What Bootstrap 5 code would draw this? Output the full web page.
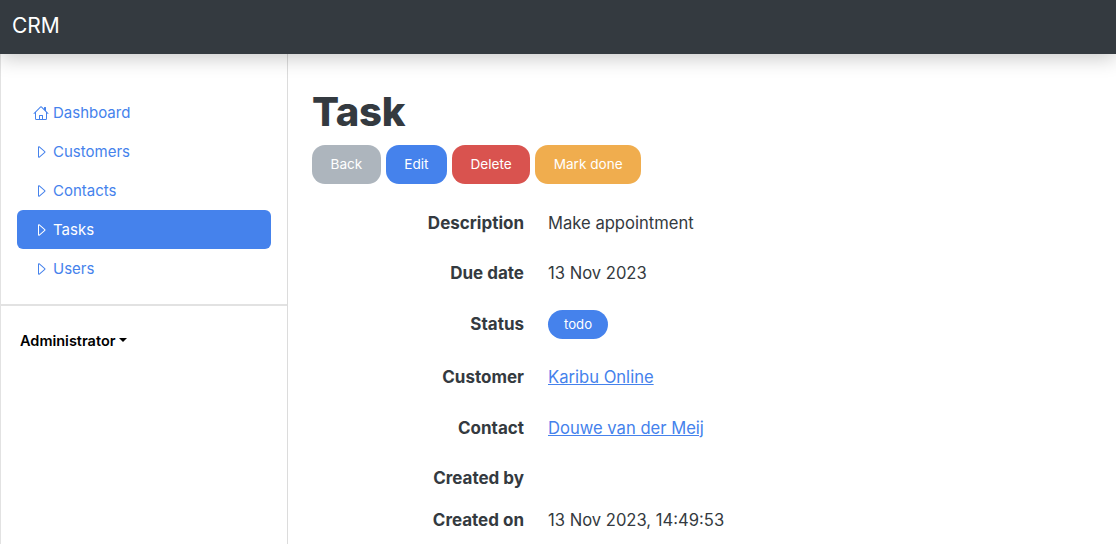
<!DOCTYPE html>
<html lang="en"><head><meta charset="utf-8"><title>Task</title>
<link href="https://cdn.jsdelivr.net/npm/bootstrap@5.3.0/dist/css/bootstrap.min.css" rel="stylesheet">
<style>
html,body{height:100%;overflow:hidden}
body{font-family:Inter,"Liberation Sans",sans-serif;color:#343a40;font-size:16px}
.crm-top{height:54px;background:#343a40;box-shadow:0 4px 20px rgba(0,0,0,.22);position:relative;z-index:2;padding:0 12px}
.crm-brand{color:#fff;font-size:21px;text-decoration:none;margin-top:-2px}
.crm-wrap{height:490px}
.crm-side{width:288px;flex:none;border-left:1px solid #e2e2e2;border-right:1px solid #dcdcdc;padding-top:39px}
.crm-nav{padding:0 16px;gap:0}
.crm-nav .nav-link{height:39px;padding:0 16px;display:flex;align-items:center;color:#4582ec;border-radius:6px;line-height:24px;font-size:15px}
.crm-nav .nav-link.active{background:#4582ec;color:#fff}
.crm-nav svg{width:16px;height:16px;margin-right:4px;flex:none}
.crm-rule{height:2px;background:#e2e2e2;margin-top:16px}
.crm-user{color:#000;font-weight:600;font-size:14.5px;text-decoration:none;display:inline-block;margin:24px 0 0 19px}
.crm-main{padding:29px 24px 0;min-width:0}
.crm-title{font-size:40px;font-weight:800;line-height:48px;margin:5px 0 9px;color:#343a40;letter-spacing:-.3px}
.crm-btn{border-radius:13px;height:39px;padding:0 18.5px;border:0;color:#fff;font-size:13.6px;line-height:39px}
.crm-back,.crm-back:hover{background:#adb5bd;color:#fff}
.crm-edit,.crm-edit:hover{background:#4582ec;color:#fff}
.crm-del,.crm-del:hover{background:#d9534f;color:#fff}
.crm-warn,.crm-warn:hover{background:#f0ad4e;color:#fff}
.crm-btns{gap:5px;margin-bottom:27px}
.crm-row{display:flex;gap:24px;line-height:24px;margin-bottom:26.4px;font-size:16.6px}
.crm-row dt{width:212px;text-align:right;flex:none;font-weight:700;margin:0;font-size:17px}
.crm-row dd{margin:0}
.crm-row a{color:#4582ec}
.crm-pill{display:inline-block;background:#4582ec;color:#fff;font-size:13.2px;font-weight:400;border-radius:15px;padding:0 16px;line-height:29px;height:29px;vertical-align:top;margin-top:-2px}
</style></head><body>
<nav class="navbar crm-top d-flex align-items-center"><a class="crm-brand" href="#">CRM</a></nav>
<div class="d-flex crm-wrap">
<aside class="crm-side">
<ul class="nav flex-column crm-nav">
<li class="nav-item"><a class="nav-link" href="#"><svg viewBox="0 0 16 16" fill="currentColor"><path d="M8.707 1.5a1 1 0 0 0-1.414 0L.646 8.146a.5.5 0 0 0 .708.708L2 8.207V13.5A1.5 1.5 0 0 0 3.5 15h9a1.5 1.5 0 0 0 1.5-1.5V8.207l.646.647a.5.5 0 0 0 .708-.708L13 5.793V2.500a.5.5 0 0 0-.5-.5h-1a.5.5 0 0 0-.5.5v1.293L8.707 1.500ZM13 7.207V13.500a.5.5 0 0 1-.5.5H10v-3.500a.5.5 0 0 0-.5-.5h-3a.5.5 0 0 0-.5.5V14H3.500a.5.5 0 0 1-.5-.5V7.207l5-5 5 5ZM9 14H7v-3h2v3Z"/></svg>Dashboard</a></li>
<li class="nav-item"><a class="nav-link" href="#"><svg viewBox="0 0 16 16" fill="currentColor"><path d="M6 12.796V3.204L11.481 8 6 12.796zm.659.753 5.48-4.796a1 1 0 0 0 0-1.506L6.660 2.451C6.011 1.885 5 2.345 5 3.204v9.592a1 1 0 0 0 1.659.753z"/></svg>Customers</a></li>
<li class="nav-item"><a class="nav-link" href="#"><svg viewBox="0 0 16 16" fill="currentColor"><path d="M6 12.796V3.204L11.481 8 6 12.796zm.659.753 5.48-4.796a1 1 0 0 0 0-1.506L6.660 2.451C6.011 1.885 5 2.345 5 3.204v9.592a1 1 0 0 0 1.659.753z"/></svg>Contacts</a></li>
<li class="nav-item"><a class="nav-link active" href="#"><svg viewBox="0 0 16 16" fill="currentColor"><path d="M6 12.796V3.204L11.481 8 6 12.796zm.659.753 5.48-4.796a1 1 0 0 0 0-1.506L6.660 2.451C6.011 1.885 5 2.345 5 3.204v9.592a1 1 0 0 0 1.659.753z"/></svg>Tasks</a></li>
<li class="nav-item"><a class="nav-link" href="#"><svg viewBox="0 0 16 16" fill="currentColor"><path d="M6 12.796V3.204L11.481 8 6 12.796zm.659.753 5.48-4.796a1 1 0 0 0 0-1.506L6.660 2.451C6.011 1.885 5 2.345 5 3.204v9.592a1 1 0 0 0 1.659.753z"/></svg>Users</a></li>
</ul>
<div class="crm-rule"></div>
<a class="crm-user dropdown-toggle" href="#">Administrator</a>
</aside>
<main class="crm-main flex-grow-1">
<h1 class="crm-title">Task</h1>
<div class="d-flex crm-btns">
<a class="btn crm-btn crm-back" href="#">Back</a>
<a class="btn crm-btn crm-edit" href="#">Edit</a>
<a class="btn crm-btn crm-del" href="#">Delete</a>
<a class="btn crm-btn crm-warn" href="#">Mark done</a>
</div>
<dl class="m-0">
<div class="crm-row"><dt>Description</dt><dd>Make appointment</dd></div>
<div class="crm-row"><dt>Due date</dt><dd>13 Nov 2023</dd></div>
<div class="crm-row"><dt>Status</dt><dd><span class="crm-pill">todo</span></dd></div>
<div class="crm-row"><dt>Customer</dt><dd><a href="#">Karibu Online</a></dd></div>
<div class="crm-row"><dt>Contact</dt><dd><a href="#">Douwe van der Meij</a></dd></div>
<div class="crm-row" style="margin-bottom:18px"><dt>Created by</dt><dd></dd></div>
<div class="crm-row"><dt>Created on</dt><dd>13 Nov 2023, 14:49:53</dd></div>
</dl>
</main>
</div>
<script src="https://cdn.jsdelivr.net/npm/bootstrap@5.3.0/dist/js/bootstrap.bundle.min.js"></script>
</body></html>
